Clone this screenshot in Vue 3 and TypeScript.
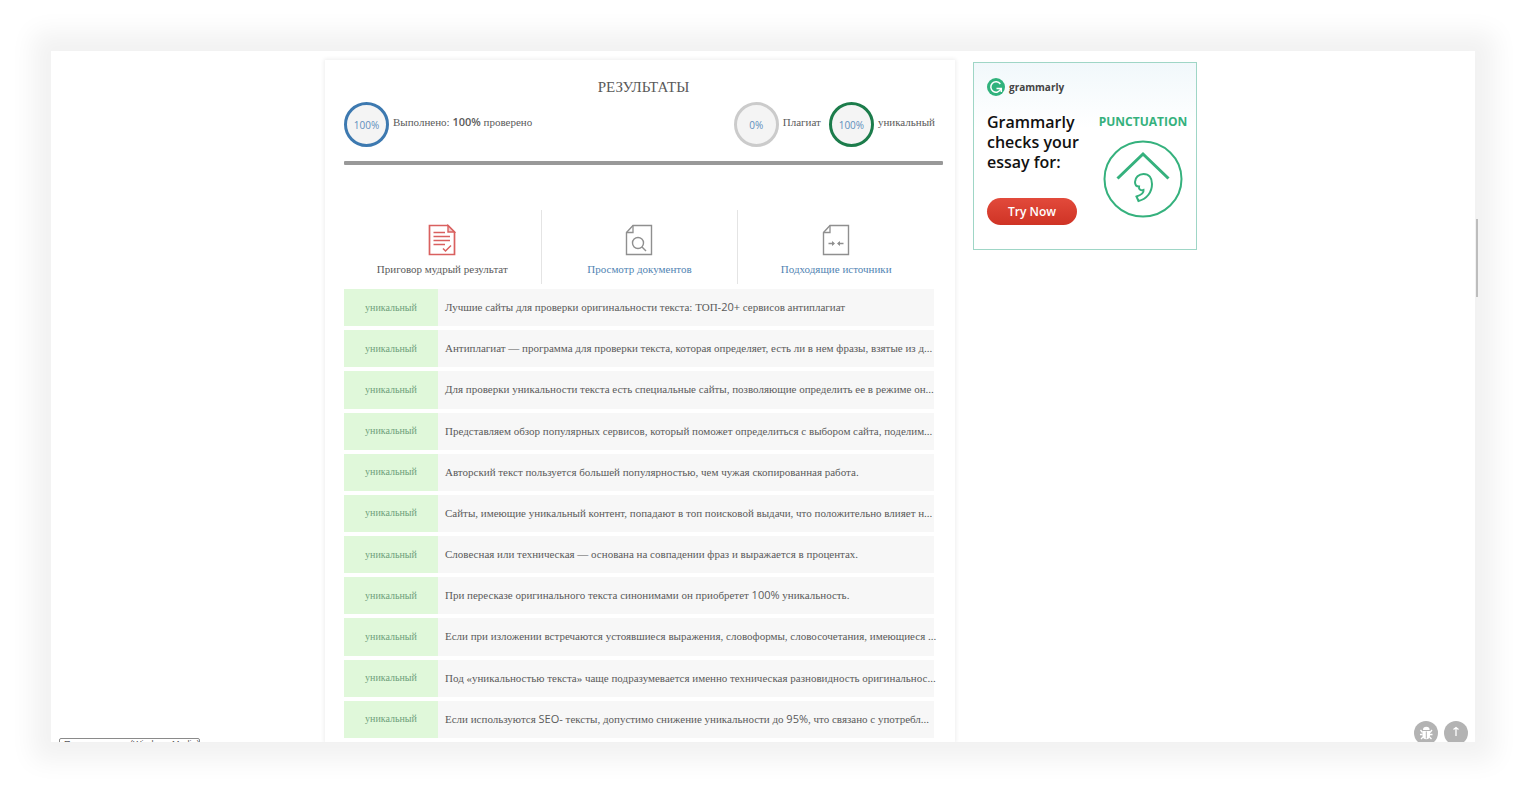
<script setup lang="ts">
import { ref } from 'vue'

interface Run {
  text: string
  latin: boolean
}

const tab = ref(0)

const sentences: string[] = [
  'Лучшие сайты для проверки оригинальности текста: ТОП-20+ сервисов антиплагиат',
  'Антиплагиат — программа для проверки текста, которая определяет, есть ли в нем фразы, взятые из д...',
  'Для проверки уникальности текста есть специальные сайты, позволяющие определить ее в режиме он...',
  'Представляем обзор популярных сервисов, который поможет определиться с выбором сайта, поделим...',
  'Авторский текст пользуется большей популярностью, чем чужая скопированная работа.',
  'Сайты, имеющие уникальный контент, попадают в топ поисковой выдачи, что положительно влияет н...',
  'Словесная или техническая — основана на совпадении фраз и выражается в процентах.',
  'При пересказе оригинального текста синонимами он приобретет 100% уникальность.',
  'Если при изложении встречаются устоявшиеся выражения, словоформы, словосочетания, имеющиеся ...',
  'Под «уникальностью текста» чаще подразумевается именно техническая разновидность оригинальнос...',
  'Если используются SEO- тексты, допустимо снижение уникальности до 95%, что связано с употребл...',
]

// Latin letters, digits and signs are set in the sans face, Cyrillic in the serif one.
function runs(s: string): Run[] {
  return s
    .split(/([A-Za-z0-9%+\-]+)/)
    .filter((t) => t !== '')
    .map((t) => ({ text: t, latin: /^[A-Za-z0-9%+\-]/.test(t) }))
}
</script>

<template>
  <div class="page">
    <div class="window">
      <div class="viewport">
        <main class="card">
          <h1>РЕЗУЛЬТАТЫ</h1>
          <div class="summary">
            <div class="stat">
              <span class="ring ring-blue">100%</span>
              <span class="caption">Выполнено: <b>100%</b> проверено</span>
            </div>
            <div class="stats">
              <div class="stat">
                <span class="ring ring-gray">0%</span>
                <span class="caption">Плагиат</span>
              </div>
              <div class="stat">
                <span class="ring ring-green">100%</span>
                <span class="caption">уникальный</span>
              </div>
            </div>
          </div>
          <div class="bar"></div>

          <nav class="tabs">
            <button type="button" :class="{ active: tab === 0 }" @click="tab = 0">
              <svg width="28" height="32" viewBox="0 0 28 32" fill="none" stroke="#d9605f">
                <path d="M1.5 1.5H20L26.500 8V30.500H1.500Z" stroke-width="1.7" />
                <path d="M20 1.500V8H26.500Z" stroke-width="1.400" fill="#f3cccc" />
                <path d="M5.500 8.500H17M5.500 12.500H22M5.500 16.500H22M5.500 20.500H17" stroke-width="1.500" />
                <path d="M15 24.500L17.500 27L23 21.500" stroke-width="1.500" />
              </svg>
              <span>Приговор мудрый результат</span>
            </button>
            <button type="button" :class="{ active: tab === 1 }" @click="tab = 1">
              <svg width="28" height="32" viewBox="0 0 28 32" fill="none" stroke="#8f8f8f">
                <path d="M8 1.500H26.500V30.500H1.500V8.500Z" stroke-width="1.400" />
                <path d="M8 1.500V8.500H1.500" stroke-width="1.300" />
                <circle cx="13" cy="19" r="5.500" stroke-width="1.400" />
                <path d="M17 23L21 27" stroke-width="1.500" />
              </svg>
              <span>Просмотр документов</span>
            </button>
            <button type="button" :class="{ active: tab === 2 }" @click="tab = 2">
              <svg width="28" height="32" viewBox="0 0 28 32" fill="none" stroke="#8f8f8f">
                <path d="M8 1.500H26.500V30.500H1.500V8.500Z" stroke-width="1.400" />
                <path d="M8 1.500V8.500H1.500" stroke-width="1.300" />
                <path d="M6.500 19.500H12M21.500 19.500H16" stroke-width="1.300" />
                <path d="M10 17L13 19.500L10 22ZM18 17L15 19.500L18 22Z" fill="#8f8f8f" stroke="none" />
              </svg>
              <span>Подходящие источники</span>
            </button>
          </nav>

          <ul class="list">
            <li v-for="(s, i) in sentences" :key="i">
              <span class="badge">уникальный</span>
              <span class="sentence"><template v-for="(r, j) in runs(s)" :key="j"><span v-if="r.latin" class="latin">{{ r.text }}</span><template v-else>{{ r.text }}</template></template></span>
            </li>
          </ul>
        </main>

        <aside class="ad">
          <div class="brand">
            <svg width="18" height="18" viewBox="0 0 18 18">
              <circle cx="9" cy="9" r="9" fill="#30b27c" />
              <path d="M13.300 6A5.200 5.200 0 1 0 13.800 11" fill="none" stroke="#fff" stroke-width="1.500" />
              <path d="M9.500 10.500H14.300V14" fill="none" stroke="#fff" stroke-width="1.500" />
            </svg>
            <span>grammarly</span>
          </div>
          <div class="pitch">
            <p>Grammarly<br />checks your<br />essay for:</p>
            <button type="button">Try Now</button>
          </div>
          <div class="topic">
            <span>PUNCTUATION</span>
            <svg width="80" height="78" viewBox="0 0 80 78" fill="none" stroke="#35b17d">
              <ellipse cx="40" cy="39" rx="38.500" ry="37.500" stroke-width="2" />
              <path d="M14.500 38.500L40 14L65.500 38.500" stroke-width="3" />
              <path
                d="M40.500 34C46 34 49 38 49 44C49 52 44 59 35.500 61L33.500 56.500C38 55 41 53 40.500 50C38 51 35.500 49.500 36 46.500C33.500 46.500 32 44.500 32 42C32 37.500 36 34 40.500 34Z"
                stroke-width="2"
              />
            </svg>
          </div>
        </aside>

        <div class="hint">Прямоугольник (Windows Media)</div>
        <div class="floating">
          <button type="button" aria-label="Сообщить об ошибке">
            <svg width="24" height="24" viewBox="0 0 24 24" fill="none" stroke="#fff" stroke-width="1.300">
              <path d="M9 9A3.200 3.200 0 0 1 15.600 9Z" fill="#fff" stroke="none" />
              <path d="M8.500 10H16V14.500A3.700 3.700 0 0 1 8.500 14.500Z" fill="#fff" stroke="none" />
              <path d="M8.500 11.500L6.500 9M16 11.500L18 9M8.500 13.500H6M16 13.500H18.500M9 16L7 18M15.500 16L17.500 18" />
              <path d="M12.300 10.500V17.500" stroke="#b3b3b3" stroke-width="1" />
            </svg>
          </button>
          <button type="button" aria-label="Наверх">
            <svg width="24" height="24" viewBox="0 0 24 24" fill="none" stroke="#fff">
              <path d="M12 7V15M9.500 8.500L12 6.500L14.500 8.500" stroke-width="1.300" />
            </svg>
          </button>
        </div>
      </div>
      <div class="thumb"></div>
    </div>
  </div>
</template>

<style>
body {
  margin: 0;
  background: #fff;
}
</style>

<style scoped>
* {
  box-sizing: border-box;
}
button {
  border: 0;
  padding: 0;
  background: none;
  font: inherit;
  cursor: pointer;
}
.page {
  display: flex;
  min-height: 100vh;
  padding: 51px 54px 51px 51px;
  overflow: hidden;
  font: 11px/16px 'Liberation Serif', serif;
  color: #5a5a5a;
}
.window {
  position: relative;
  flex: 1;
  display: flex;
  background: #fff;
  box-shadow: 1px 0 24px 19px #f2f2f2;
}
.viewport {
  position: relative;
  flex: 1;
  display: flex;
  justify-content: center;
  gap: 18px;
  padding: 9px 4px 0 0;
  overflow: hidden;
}
.card {
  display: flex;
  flex-direction: column;
  width: 630px;
  padding: 17px 12px 4px 19px;
  box-shadow: 0 0 4px 1px #eee;
}
h1 {
  margin: 0 0 5px;
  font-size: 15px;
  line-height: 20px;
  font-weight: 400;
  text-align: center;
}
.summary,
.stats,
.stat {
  display: flex;
}
.summary {
  justify-content: space-between;
  padding-right: 8px;
}
.stats {
  gap: 8px;
}
.stat {
  gap: 4px;
}
.ring {
  width: 45px;
  height: 45px;
  border: 3px solid;
  border-radius: 50%;
  background: #f4f4f4;
  text-align: center;
  font: 10px/40px 'Open Sans', sans-serif;
}
.ring-blue {
  border-color: #3d79b0;
}
.ring-gray {
  border-color: #cbcbcb;
}
.ring-green {
  border-color: #1c7c4b;
}
.ring::first-line {
  color: #5f8fbd;
}
.caption {
  padding-top: 12px;
}
.caption b,
.latin {
  font-family: 'Open Sans', sans-serif;
}
.caption b {
  font-weight: 600;
}
.bar {
  height: 4px;
  margin: 14px 0 45px;
  border-radius: 1px;
  background: #999;
}
.tabs {
  display: grid;
  grid-template-columns: repeat(3, 1fr);
  height: 74px;
  margin: 0 9px 5px 0;
}
.tabs button {
  display: flex;
  flex-direction: column;
  align-items: center;
  gap: 5px;
  padding-top: 14px;
  color: #5184b3;
}
.tabs button + button {
  border-left: 1px solid #e4e4e4;
}
.tabs button.active {
  color: #5a5a5a;
}
.list {
  flex: 1;
  display: grid;
  grid-template-columns: minmax(0, 1fr);
  grid-auto-rows: 1fr;
  gap: 4px;
  margin: 0 9px 0 0;
  padding: 0;
  list-style: none;
}
.list li {
  display: flex;
  align-items: stretch;
  min-height: 37px;
  background: #f7f7f7;
}
.badge {
  display: flex;
  flex: none;
  align-items: center;
  justify-content: center;
  width: 94px;
  background: #e0f8da;
  color: #6f9f7b;
  font-size: 10px;
}
.sentence {
  flex: 1;
  min-width: 0;
  padding: 10px 0 0 7px;
  white-space: nowrap;
}
.ad {
  display: grid;
  grid-template-columns: 111px 1fr;
  grid-template-rows: 34px 1fr;
  align-self: flex-start;
  width: 224px;
  height: 188px;
  margin-top: 2px;
  padding: 15px 8px 0 13px;
  border: 1px solid #9fd6c6;
  background: linear-gradient(#f1f8fb, #fff 35%);
  font-family: 'Open Sans', sans-serif;
}
.brand {
  grid-column: 1 / 3;
  display: flex;
  gap: 4px;
  font-size: 10px;
  line-height: 18px;
  font-weight: 700;
  color: #444;
}
.pitch p {
  margin: 0 0 26px;
  font: 600 16px/20px 'Open Sans', sans-serif;
  color: #111;
  white-space: nowrap;
}
.pitch button {
  width: 90px;
  height: 27px;
  border-radius: 14px;
  background: linear-gradient(#e24a3b, #cf3325);
  color: #fff;
  font-size: 12px;
  font-weight: 600;
}
.topic {
  display: flex;
  flex-direction: column;
  align-items: center;
  gap: 8px;
  color: #35b17d;
  font-size: 12px;
  line-height: 20px;
  font-weight: 700;
}
.hint {
  position: absolute;
  left: 8px;
  bottom: -8px;
  width: 141px;
  height: 12px;
  overflow: hidden;
  border: 1px solid #8a8a8a;
  border-radius: 2px;
  padding-left: 4px;
  white-space: nowrap;
  font: 9px/10px 'Liberation Sans', sans-serif;
}
.floating {
  position: absolute;
  right: 7px;
  bottom: -3px;
  display: flex;
  gap: 6px;
}
.floating button {
  width: 24px;
  height: 24px;
  border-radius: 50%;
  background: #b3b3b3;
}
.thumb {
  position: absolute;
  right: -3px;
  top: 168px;
  width: 2px;
  height: 78px;
  background: #bdbdbd;
}
</style>
